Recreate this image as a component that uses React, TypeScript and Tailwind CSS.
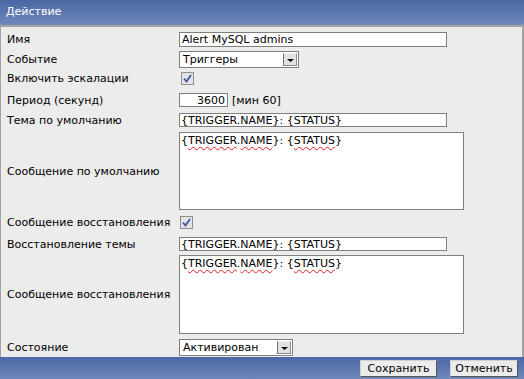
import React from "react";

const font = { fontFamily: '"DejaVu Sans", Verdana, sans-serif' };

function Squiggle({ children }: { children: React.ReactNode }) {
  return (
    <span className="underline decoration-wavy decoration-[#e02020] decoration-1 underline-offset-[2px]">
      {children}
    </span>
  );
}

function Macro() {
  return (
    <>
      {"{"}
      <Squiggle>TRIGGER</Squiggle>.<Squiggle>NAME</Squiggle>
      {"}: {"}
      <Squiggle>STATUS</Squiggle>
      {"}"}
    </>
  );
}

function Checkbox() {
  return (
    <span className="flex h-[13px] w-[13px] items-center justify-center border border-[#8e8f8f] bg-[#e4e4e4]">
      <svg width="9" height="9" viewBox="0 0 9 9">
        <path d="M1 4.5 L3.5 7.5 L8 1" stroke="#3c58a6" strokeWidth="1.8" fill="none" />
      </svg>
    </span>
  );
}

function Select({ value, width }: { value: string; width: string }) {
  return (
    <div className={`flex h-[17px] items-center border border-[#7f7f7f] bg-white ${width}`}>
      <span className="flex-1 pl-[3px] text-[11px] leading-none text-black">{value}</span>
      <span className="mr-[1px] flex h-[13px] w-[14px] items-end justify-center border border-t-[#f4f4f4] border-l-[#707070] border-r-[#8a8a8a] border-b-[#8a8a8a] bg-[#e2e2e2] pb-[3px]">
        <svg width="7" height="3" viewBox="0 0 7 3">
          <path d="M0 0 H7 L3.5 3 Z" fill="#000" />
        </svg>
      </span>
    </div>
  );
}

function Row({ label, children, className = "" }: { label: string; children: React.ReactNode; className?: string }) {
  return (
    <div className={`grid grid-cols-[172px_1fr] items-center ${className}`}>
      <div className="text-[11px] leading-none text-black">{label}</div>
      <div className="flex items-center">{children}</div>
    </div>
  );
}

export default function App() {
  return (
    <div className="h-[379px] w-[524px] overflow-hidden bg-white" style={font}>
      <div className="flex h-[25px] items-center bg-gradient-to-b from-[#4a68a4] to-[#7088bb] pl-[6px] text-[11px] text-white">
        Действие
      </div>
      <div className="h-[2px] bg-[#a3a3a3]" />
      <div className="flex h-[330px] flex-col border-l border-r-2 border-[#a3a3a3] bg-[#ececec] pl-[6px] pt-[5px]">
        <Row label="Имя">
          <div className="flex h-[15px] w-[268px] items-center border border-[#7f7f7f] bg-white pl-[2px] text-[11px] leading-none">
            Alert MySQL admins
          </div>
        </Row>
        <Row label="Событие" className="mt-[4px]">
          <Select value="Триггеры" width="w-[120px]" />
        </Row>
        <Row label="Включить эскалации" className="mt-[4px]">
          <span className="ml-[2px]">
            <Checkbox />
          </span>
        </Row>
        <Row label="Период (секунд)" className="mt-[8px]">
          <div className="flex h-[14px] w-[49px] items-center justify-end border border-[#7f7f7f] bg-white pr-[2px] text-[11px] leading-none">
            3600
          </div>
          <span className="ml-[4px] text-[11px] leading-none">[мин 60]</span>
        </Row>
        <Row label="Тема по умолчанию" className="mt-[6px]">
          <div className="flex h-[14px] w-[268px] items-center border border-[#7f7f7f] bg-white pl-[1px] text-[11px] leading-none">
            {"{TRIGGER.NAME}: {STATUS}"}
          </div>
        </Row>
        <Row label="Сообщение по умолчанию" className="mt-[5px]">
          <div className="h-[78px] w-[285px] border border-[#7f7f7f] bg-white pl-[1px] pt-[1px] text-[11px] leading-[13px]">
            <Macro />
          </div>
        </Row>
        <Row label="Сообщение восстановления" className="mt-[6px]">
          <span className="ml-[1px]">
            <Checkbox />
          </span>
        </Row>
        <Row label="Восстановление темы" className="mt-[8px]">
          <div className="flex h-[14px] w-[268px] items-center border border-[#7f7f7f] bg-white pl-[1px] text-[11px] leading-none">
            {"{TRIGGER.NAME}: {STATUS}"}
          </div>
        </Row>
        <Row label="Сообщение восстановления" className="mt-[4px]">
          <div className="h-[79px] w-[285px] border border-[#7f7f7f] bg-white pl-[1px] pt-[1px] text-[11px] leading-[13px]">
            <Macro />
          </div>
        </Row>
        <Row label="Состояние" className="mt-[5px]">
          <Select value="Активирован" width="w-[114px]" />
        </Row>
      </div>
      <div className="flex h-[22px] items-end justify-end gap-[13px] bg-gradient-to-b from-[#4a68a4] to-[#7088bb] pb-[2px] pr-[6px]">
        <button className="h-[17px] w-[77px] border border-t-[#d0d0d0] border-l-[#d0d0d0] border-r-[#555] border-b-[#555] bg-[#ececec] text-[11px] leading-none text-black">
          Сохранить
        </button>
        <button className="h-[17px] w-[68px] border border-t-[#d0d0d0] border-l-[#d0d0d0] border-r-[#555] border-b-[#555] bg-[#ececec] text-[11px] leading-none text-black">
          Отменить
        </button>
      </div>
    </div>
  );
}
